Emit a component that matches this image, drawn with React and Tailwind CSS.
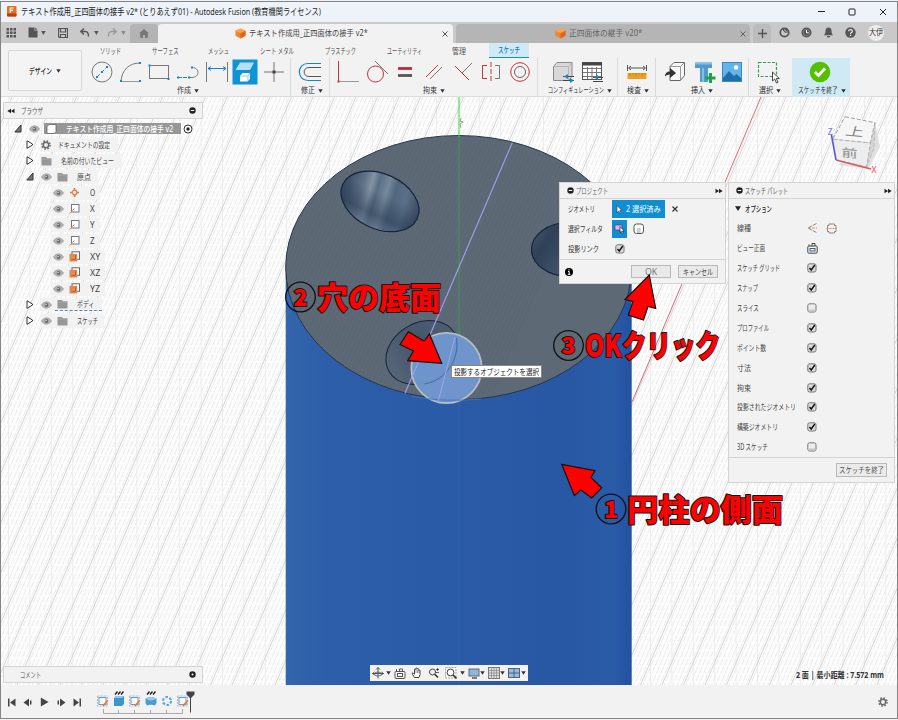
import React, { useLayoutEffect, useRef } from "react";

// Condenses a line of text so that it fills the width its class gives.
function Fit({ className = "", children }) {
  const outer = useRef(null);
  const inner = useRef(null);
  useLayoutEffect(() => {
    const o = outer.current;
    const i = inner.current;
    if (i.offsetWidth > 0) i.style.transform = `scaleX(${o.clientWidth / i.offsetWidth})`;
  });
  return (
    <span ref={outer} className={`block shrink-0 whitespace-nowrap leading-none ${className}`}>
      <span ref={inner} className="inline-block origin-left align-top leading-none">
        {children}
      </span>
    </span>
  );
}

function Svg({ w = 26, h = 26, className = "", children }) {
  return (
    <svg width={w} height={h} viewBox={`0 0 ${w} ${h}`} fill="none" className={`shrink-0 ${className}`}>
      {children}
    </svg>
  );
}

const Caret = ({ className = "" }) => (
  <Svg w={5} h={4} className={className}>
    <path d="M0.3 0.3h4.4L2.5 3.8z" fill="#333" />
  </Svg>
);

const Minus = () => (
  <Svg w={7} h={7}>
    <circle cx="3.5" cy="3.5" r="3.2" fill="#222" />
    <path d="M1.8 3.5h3.4" stroke="#fff" />
  </Svg>
);

const FastForward = ({ flip }) => (
  <Svg w={8} h={6} className={flip ? "rotate-180" : ""}>
    <path d="M0.5 0.8 4 3 0.5 5.2zM4 0.8 7.7 3 4 5.2z" fill="#222" />
  </Svg>
);

const Check = ({ on = true }) => (
  <Svg w={10} h={10}>
    <rect x="0.8" y="0.8" width="8.2" height="8.2" rx="1.8" fill={on ? "#d9d9d9" : "#ececec"} stroke="#777" />
    {on ? <path d="M2.5 5 4.2 7 7.8 2" stroke="#111" strokeWidth="1.4" /> : <path d="M1.5 6.5h7v2h-7z" fill="#c6c6c6" />}
  </Svg>
);

const Cube = () => (
  <Svg w={11} h={11}>
    <path d="M5.5 0.5 10.5 2.8v5L5.5 10.5 0.5 7.8v-5z" fill="#f58233" />
    <path d="M5.5 0.5 10.5 2.8 5.5 5.2 0.5 2.8z" fill="#fba45f" />
    <path d="M5.5 5.2 10.5 2.8v5l-5 2.7z" fill="#e0641a" />
  </Svg>
);

function TitleBar() {
  return (
    <div className="flex h-[22px] shrink-0 items-center bg-[#eef3fa] pt-px pl-[7px]">
      <Svg w={10} h={11}>
        <rect x="0" y="0" width="9.5" height="10.5" rx="1" fill="#f26a1b" />
        <path d="M0 7.5h9.5v2a1 1 0 0 1-1 1H1a1 1 0 0 1-1-1z" fill="#b8400a" />
        <path d="M3.2 7V2h3.6M3.2 4.4h3" stroke="#fff" strokeWidth="1.1" />
      </Svg>
      <Fit className="ml-[4px] w-[300px] text-[9.5px] text-[#1c1c1c]">
        テキスト作成用_正四面体の接手 v2* (とりあえず01) - Autodesk Fusion (教育機関ライセンス)
      </Fit>
      <div className="ml-auto flex items-center gap-[23px] pr-[11px]">
        <Svg w={7} h={7}><path d="M0 3.500h7" stroke="#222" /></Svg>
        <Svg w={8} h={8}><rect x="1" y="1" width="6" height="6" rx="0.8" stroke="#222" /></Svg>
        <Svg w={8} h={8}><path d="M1 1l6 6M7 1 1 7" stroke="#222" /></Svg>
      </div>
    </div>
  );
}

function TabBar() {
  return (
    <div className="flex h-[21px] shrink-0 items-end bg-[#c9c9c9]">
      <div className="flex h-[21px] w-[130px] items-center pl-[6px]">
        <Svg w={11} h={10}>
          {[0, 3.5, 7].map((y) => [0.5, 4, 7.5].map((x) => <rect key={`${x}-${y}`} x={x} y={y} width="2.5" height="2.5" fill="#555" />))}
        </Svg>
        <Svg w={10} h={11} className="ml-[11px]"><path d="M0.5 0.5h6v3h3v7h-9z" fill="#555" /><path d="M7.2 0.5 9.5 2.8H7.2z" fill="#555" /></Svg>
        <Svg w={5} h={4} className="ml-[3px]"><path d="M0.2 0h4.4L2.4 4z" fill="#555" /></Svg>
        <Svg w={10} h={10} className="ml-[12px]"><path d="M0.5 0.5h9v9h-8l-1-1zM2.5 0.5v3.500h5V.5M2.5 9.5V6.5h5v3" stroke="#555" strokeWidth="1.2" /></Svg>
        <Svg w={10} h={9} className="ml-[12px]"><path d="M4 0.5 0.8 3.5 4 6.5M1 3.5h4.5c2 0 3.2 2 2.8 5" stroke="#555" strokeWidth="1.4" /></Svg>
        <Svg w={5} h={4} className="ml-[4px]"><path d="M0.2 0h4.4L2.4 4z" fill="#555" /></Svg>
        <Svg w={10} h={9} className="ml-[8px]"><path d="M6 0.5 9.2 3.5 6 6.5M9 3.5H4.5c-2 0-3.2 2-2.8 5" stroke="#999" strokeWidth="1.4" /></Svg>
        <Svg w={5} h={4} className="ml-[4px]"><path d="M0.2 0h4.4L2.4 4z" fill="#888" /></Svg>
      </div>
      <div className="flex h-[19px] w-[28px] items-center justify-center rounded-t-sm bg-[#b3b3b3]">
        <Svg w={10} h={9}><path d="M5 0 10 4.5H8.7V9H6V6H4v3H1.3V4.5H0z" fill="#777" /></Svg>
      </div>
      <div className="flex h-[19px] w-[295px] items-center rounded-t-sm bg-[#f2f2f2] pl-[77px]">
        <Cube />
        <Fit className="ml-[3px] w-[119px] text-[8.5px] text-[#444]">テキスト作成用_正四面体の接手 v2*</Fit>
        <Svg w={6} h={6} className="ml-auto mr-[5px]"><path d="M0.5 0.5l5 5M5.5.5l-5 5" stroke="#555" /></Svg>
      </div>
      <div className="ml-[3px] flex h-[19px] w-[294px] items-center rounded-t-sm bg-[#b5b5b5] pl-[99px]">
        <Cube />
        <Fit className="ml-[3px] w-[73px] text-[8.5px] text-[#666]">正四面体の継手 v20*</Fit>
        <Svg w={6} h={6} className="ml-auto mr-[4px]"><path d="M0.5 0.5l5 5M5.5.5l-5 5" stroke="#666" /></Svg>
      </div>
      <div className="ml-[3px] flex h-[19px] w-[18px] items-center justify-center rounded-t-sm bg-[#bcbcbc]">
        <Svg w={9} h={9}><path d="M4.5 0v9M0 4.5h9" stroke="#555" strokeWidth="1.5" /></Svg>
      </div>
      <div className="flex h-[21px] items-center gap-[11px] pl-[8px]">
        <Svg w={11} h={11}><circle cx="5.5" cy="5.5" r="4.2" stroke="#555" strokeWidth="1.8" /><path d="M4 1.5h4.5v4L6.5 6 4 3.5z" fill="#555" /><path d="M5 2.5 7.8 5" stroke="#c9c9c9" /></Svg>
        <Svg w={11} h={11}><circle cx="5.5" cy="5.5" r="5" fill="#555" /><circle cx="5.5" cy="5.5" r="3.300" stroke="#999" strokeWidth="0.6" /><path d="M5.5 3v2.800h2.200" stroke="#fff" /></Svg>
        <Svg w={11} h={11}><path d="M5.5 0.5c2 0 3 1.4 3 3.2 0 3 .8 3.6 1.7 4.5H.8c.9-.9 1.7-1.5 1.7-4.5C2.500 1.900 3.500.5 5.500.5zM4 9h3c0 2-3 2-3 0z" fill="#555" /></Svg>
        <Svg w={11} h={11}><circle cx="5.5" cy="5.5" r="5.2" fill="#555" /><path d="M3.7 4.300c0-2.400 3.700-2.200 3.700-.1 0 1.300-1.900 1.300-1.900 2.700M5.500 7.700v1.200" stroke="#eee" strokeWidth="1.2" /></Svg>
        <div className="ml-[1px] flex h-4 w-4 items-center justify-center rounded-full bg-[#ececec]">
          <Fit className="w-[14px] text-[7.5px] text-[#333]">大伊</Fit>
        </div>
      </div>
    </div>
  );
}

const BLUE = "#1683cf";
const RED = "#c9303c";
const dot = (x, y, c = BLUE) => <rect key={`${x},${y}`} x={x - 1} y={y - 1} width="2" height="2" fill={c} />;

const icons = {
  circle: <><circle cx="13" cy="13" r="10" stroke="#777" /><path d="M8 18 18 8" stroke={BLUE} strokeDasharray="4 2" />{dot(8, 18)}{dot(13, 13)}{dot(18, 8)}</>,
  arc: <><path d="M3 22C4 11 11 4 22 4" stroke="#777" /><path d="M3 22.500h19" stroke="#999" />{dot(3, 22)}{dot(22, 22)}{dot(22, 4)}</>,
  rect: <><rect x="3.500" y="6.500" width="19" height="13" stroke="#777" />{dot(3.5, 6.5)}{dot(22.5, 20)}</>,
  spline: <><path d="M3 18.500h11" stroke={BLUE} strokeDasharray="4 1" /><path d="M17 8.500c8 0 8 10 0 10h-2" stroke="#777" />{dot(3, 18.5)}{dot(14, 18.5)}{dot(17, 8.5)}</>,
  dim: <><path d="M2.500 3v20M23.500 3v20" stroke="#777" /><path d="M4 9.500h18M7 7.500 4 9.500l3 2M19 7.500l3 2-3 2" stroke={BLUE} /></>,
  project: <><rect x="0.500" y="0.500" width="25" height="25" fill="#0c94d6" /><path d="M8 3.500h14l-4 7.500H3.500z" fill="#b7dff3" /><path d="M8 17l2.500-3H18v6l-2.500 2.500H8z" fill="#fff" /><path d="M8 17h8v5M16 17l2-3" stroke="#8cc9ea" /></>,
  point: <><path d="M13 3v20M3 13h20" stroke="#777" /><rect x="11.500" y="11.500" width="3" height="3" fill="#444" /></>,
  offset: <><path d="M24 4.500H11c-11.500 0-11.500 17 0 17h13" stroke={BLUE} strokeWidth="1.200" /><path d="M24 8.500H12c-6.500 0-6.500 9 0 9h12" stroke="#555" /></>,
  vert: <><path d="M3.500 2v20" stroke={RED} /><path d="M3 22.500h21" stroke="#999" />{dot(3.5, 22.5, RED)}</>,
  tangent: <><circle cx="11.500" cy="15" r="8" stroke={RED} /><path d="M11 2l13 13" stroke="#777" /></>,
  equal: <><path d="M6 9.500h14" stroke="#b82e38" strokeWidth="2.800" /><path d="M6 16.500h14" stroke="#555" strokeWidth="2.800" /></>,
  parallel: <><path d="M5 18 17 6" stroke={RED} /><path d="M9 20 21 8" stroke="#777" /></>,
  perp: <><path d="M5 7l14 14" stroke={RED} /><path d="M12 14 22 4" stroke="#777" /></>,
  mirror: <><path d="M9 6.500H4.500v13H9" stroke={RED} /><path d="M13 3v20" stroke={RED} strokeDasharray="5 2" /><path d="M17 6.500h4.500v13H17" stroke="#777" /></>,
  conc: <><circle cx="13" cy="13" r="9.300" stroke={RED} /><circle cx="13" cy="13" r="5.500" stroke="#666" /></>,
  config: <><path d="M3.500 7.500l3.500-4h15v14l-3.500 4h-15z" fill="#d8d8d8" stroke="#888" /><path d="M3.500 7.500h15v14M18.500 7.500l3.500-4" stroke="#b5b5b5" /><path d="M13 17.500h11M13 21.500h11" stroke="#444" strokeWidth="1.200" /><path d="M14 17.500l4-2.500v5zM24 21.500l-4-2.500v5z" fill={BLUE} /></>,
  table: <><rect x="3.500" y="3.500" width="19" height="17" fill="#fff" stroke="#555" /><path d="M3 5h20" stroke="#444" strokeWidth="3" /><path d="M4 9.500h18M4 13.500h18M4 17.500h18M8.500 8v12M13 8v12M17.500 8v12" stroke="#777" /><path d="M14 18.500h10M14 22.500h10" stroke="#444" strokeWidth="1.200" /><path d="M15 18.500l4-2.500v5z" fill={BLUE} /></>,
  ruler: <><path d="M3.500 6v6M22.500 6v6M5 9h16M7 7 4.500 9 7 11M19 7l2.500 2-2.500 2" stroke="#555" /><rect x="3.500" y="14" width="19" height="6" fill="#e9a125" /><path d="M6 14v2.500M9 14v1.500M12 14v2.500M15 14v1.500M18 14v2.500M21 14v1.500" stroke="#a86f08" strokeWidth="0.700" /></>,
  derive: <><path d="M8 7.500l4-4h10.500v13l-4 5H8z" fill="#f9f9f9" stroke="#666" /><path d="M8 7.500h10.500v14M18.500 7.500l4-4" stroke="#999" /><path d="M3 17.500c0-3.500 2-5 5-5V9l6 5-6 5v-3.500c-3 0-4 1-5 2z" fill="#333" /></>,
  fastener: <><path d="M4 3.500h17v5.500h-4v14h-8V9H4z" fill="#4f9bcf" /><path d="M4 3.500h17v2H4zM11 9h2v14h-2z" fill="#84c0e6" /><path d="M19.500 14v10M14.500 19h10" stroke="#21a045" strokeWidth="3" /></>,
  image: <><rect x="3.500" y="3.500" width="19" height="19" fill="#63b4e8" stroke="#3c87be" /><circle cx="17" cy="8.500" r="2.200" fill="#fff" /><path d="M4 19l6-7 5 5 2.500-2 4.500 4v3H4z" fill="#1e6fab" /></>,
  select: <><rect x="3.500" y="3.500" width="18" height="14" stroke="#2da35b" strokeWidth="1.200" strokeDasharray="3 1.500" /><path d="M17.500 13v9l2.200-2 1.800 4 1.500-.8-1.700-3.700h3z" fill="#fff" stroke="#333" strokeWidth="0.900" /></>,
  done: <><circle cx="13" cy="13" r="10.300" fill="#55c000" /><path d="M8 13l3.500 3.500 6.500-7" stroke="#fff" strokeWidth="2.800" /></>,
};

function Group({ className, pad, icon, label, labelW, labelClass, last }) {
  return (
    <div className={`flex h-[40px] shrink-0 flex-col ${last ? "" : "border-r border-[#d9d9d9]"} ${className}`}>
      <div className={`flex h-[27px] items-center ${pad}`}>
        {icon.map((n) => (
          <div key={n} className="flex w-[28.6px] shrink-0 justify-center"><Svg>{icons[n]}</Svg></div>
        ))}
      </div>
      <div className={`flex h-[11px] items-center gap-[3px] ${labelClass}`}>
        <Fit className={`text-[7.5px] text-[#333] ${labelW}`}>{label}</Fit>
        <Caret />
      </div>
    </div>
  );
}

function Ribbon() {
  return (
    <div className="flex h-[54px] shrink-0 border-b border-[#dcdcdc] bg-[#f2f2f2]">
      <div className="mt-[7px] ml-[8px] flex h-[41px] w-[74px] shrink-0 items-center justify-center gap-[4px] rounded-[2px] border border-[#d8d8d8] bg-[#f4f4f4]">
        <Fit className="w-[23px] text-[8px] font-medium text-[#222]">デザイン</Fit>
        <Caret />
      </div>
      <div className="ml-[6px] flex flex-col">
        <div className="flex h-[15px] items-center text-[8px] text-[#555]">
          <Fit className="ml-[12px] w-[21px]">ソリッド</Fit>
          <Fit className="ml-[31px] w-[27px]">サーフェス</Fit>
          <Fit className="ml-[29px] w-[21px]">メッシュ</Fit>
          <Fit className="ml-[31px] w-[34px]">シート メタル</Fit>
          <Fit className="ml-[31px] w-[31px]">プラスチック</Fit>
          <Fit className="ml-[31px] w-[35px]">ユーティリティ</Fit>
          <Fit className="ml-[30px] w-[14px]">管理</Fit>
          <div className="ml-[23px] flex h-[15px] w-[40px] items-center justify-center border-b-[1.500px] border-[#0d8fd0] bg-[#cfeaf6] text-[#0878ba]">
            <Fit className="w-[22px] font-medium">スケッチ</Fit>
          </div>
        </div>
        <div className="flex">
          <Group className="w-[203px]" pad="" icon={["circle", "arc", "rect", "spline", "dim", "project", "point"]} label="作成" labelW="w-[14px]" labelClass="pl-[89px]" />
          <Group className="w-[39px]" pad="pl-[5px]" icon={["offset"]} label="修正" labelW="w-[14px]" labelClass="pl-[10px]" />
          <Group className="w-[208px]" pad="pl-[4px]" icon={["vert", "tangent", "equal", "parallel", "perp", "mirror", "conc"]} label="拘束" labelW="w-[14px]" labelClass="pl-[93px]" />
          <Group className="w-[80px]" pad="pl-[11px]" icon={["config", "table"]} label="コンフィギュレーション" labelW="w-[56px]" labelClass="pl-[10px]" />
          <Group className="w-[38px]" pad="pl-[5px]" icon={["ruler"]} label="検査" labelW="w-[14px]" labelClass="pl-[9px]" />
          <Group className="w-[93px]" pad="pl-[5px]" icon={["derive", "fastener", "image"]} label="挿入" labelW="w-[14px]" labelClass="pl-[35px]" />
          <Group last className="w-[43px]" pad="pl-[5px]" icon={["select"]} label="選択" labelW="w-[14px]" labelClass="pl-[10px]" />
          <Group last className="w-[58px] bg-[#cfeaf5]" pad="pl-[14px]" icon={["done"]} label="スケッチを終了" labelW="w-[40px]" labelClass="pl-[6px]" />
        </div>
      </div>
    </div>
  );
}

const range = (n) => Array.from({ length: n }, (_, i) => i);

function Canvas() {
  return (
    <svg className="absolute inset-0" width="898" height="588" viewBox="0 97 898 588" fill="none">
      <defs>
        <linearGradient id="side" x1="0" x2="1" y1="0" y2="0">
          <stop offset="0" stopColor="#3366ad" />
          <stop offset="0.12" stopColor="#2d5ea9" />
          <stop offset="0.8" stopColor="#2858a3" />
          <stop offset="0.95" stopColor="#2a5ba7" />
          <stop offset="1" stopColor="#2352a0" />
        </linearGradient>
        <linearGradient id="bore" x1="0" x2="1" y1="0.100" y2="0">
          <stop offset="0" stopColor="#3d4f66" />
          <stop offset="0.2" stopColor="#5f7286" />
          <stop offset="0.3" stopColor="#8393a4" />
          <stop offset="0.38" stopColor="#5a6d82" />
          <stop offset="0.5" stopColor="#76899b" />
          <stop offset="0.6" stopColor="#52677e" />
          <stop offset="0.75" stopColor="#5b7088" />
          <stop offset="1" stopColor="#2e4058" />
        </linearGradient>
        <linearGradient id="shade" x1="0" x2="0" y1="0" y2="1">
          <stop offset="0.35" stopColor="#24364e" stopOpacity="0" />
          <stop offset="0.75" stopColor="#24364e" stopOpacity="0.5" />
          <stop offset="1" stopColor="#5d7188" stopOpacity="0.6" />
        </linearGradient>
        <linearGradient id="bore2" x1="0" x2="1" y1="0" y2="0.5">
          <stop offset="0" stopColor="#4a5b70" />
          <stop offset="0.3" stopColor="#2f4057" />
          <stop offset="1" stopColor="#50637b" />
        </linearGradient>
        <linearGradient id="bore3" x1="0" x2="1" y1="0" y2="0">
          <stop offset="0" stopColor="#566577" />
          <stop offset="0.5" stopColor="#46566b" />
          <stop offset="1" stopColor="#4d5e73" />
        </linearGradient>
        <clipPath id="face"><ellipse cx="458.700" cy="267.500" rx="173" ry="132" /></clipPath>
      </defs>
      <rect x="0" y="97" width="898" height="588" fill="#fdfdfd" />
      <g stroke="#e9e9e9" strokeWidth="0.9" strokeDasharray="7 1.500">
        {range(270).map((i) => <path key={i} d={`M${i * 4.3 + 10} 97l-253 588`} />)}
      </g>
      <g stroke="#ededed">
        {range(42).map((i) => <path key={i} d={`M${i * 21.4 + 8.5} 97v588`} />)}
      </g>
      <g stroke="#cfcfcf" strokeWidth="0.9">
        {range(54).map((i) => <path key={i} d={`M${i * 21.5 + 12} 97l-253 588`} />)}
      </g>
      <path d="M761 97 632 402" stroke="#dc6b72" />
      <path d="M285.700 267v418h346V267z" fill="url(#side)" />
      <ellipse cx="458.700" cy="267.500" rx="173" ry="132" fill="#5e6976" stroke="#25364b" />
      <g clipPath="url(#face)" stroke="#566372" strokeWidth="0.8" opacity="0.6">
        {range(75).map((i) => <path key={i} d={`M${i * 4.3 + 285} 135l-114 265`} />)}
      </g>
      <g transform="rotate(24.500 380 201.400)">
        <ellipse cx="380" cy="201.400" rx="41" ry="27.500" fill="url(#bore)" />
        <ellipse cx="380" cy="201.400" rx="41" ry="27.500" fill="url(#shade)" stroke="#14243a" strokeWidth="1.200" />
      </g>
      <ellipse cx="569" cy="249.500" rx="37.500" ry="27" fill="url(#bore2)" stroke="#14243a" strokeWidth="1.200" />
      <ellipse cx="422" cy="352.500" rx="38" ry="29.600" transform="rotate(-30 422 352.500)" fill="url(#bore3)" stroke="#14243a" />
      <path d="M459 97v40" stroke="#35e035" />
      <path d="M459 137v233" stroke="#3c9a55" />
      <path d="M459 400v285" stroke="#2f64ab" />
      <path d="M461 118l-1 3 3 1-3 2 1 4" stroke="#777" strokeWidth="0.700" />
      <path d="M512.300 142.700 405 393.300" stroke="#a39be6" strokeWidth="1.200" />
      <circle cx="446.500" cy="368" r="35.200" fill="#7199d3" fillOpacity="0.93" stroke="#b6bcc2" strokeWidth="1.800" />
      <path d="M456.500 338c3 20-9 42-32 46" stroke="#43649a" strokeWidth="0.900" />
      <path d="M411.500 396c23 5 46 5 69 3" stroke="#4a74b2" strokeWidth="0.900" />
      <path d="M455 337 438 402M428 340l-16 37" stroke="#9aa6ec" />
      <g>
        <path d="M870 142l5-19 5 24-12 22-30-4z" fill="#e0e0e0" />
        <path d="M845 116.700 875 122.700 870.500 143 832.700 139.300z" fill="#f6f6f6" stroke="#888" strokeDasharray="4 2" strokeWidth="0.800" />
        <path d="M832.700 139.300 870.500 143 866.700 166.700 836 160z" fill="#ededed" stroke="#aaa" strokeDasharray="4 2" strokeWidth="0.800" />
        <path d="M875 122.700 870.500 143 866.700 166.700 874 148z" fill="#d5d5d5" stroke="#aaa" strokeDasharray="4 2" strokeWidth="0.700" />
        <path d="M831.300 134 836 160" stroke="#5a5ae0" strokeWidth="1.600" />
        <path d="M836 160l35 9" stroke="#d05c66" strokeWidth="1.500" />
        <g className="font-['Noto_Sans_CJK_JP',sans-serif]">
          <text transform="matrix(1.15 .1 -.2 .72 844.500 135)" fontSize="16" fill="#888">上</text>
          <text transform="matrix(1 .1 0 .72 841.500 156.500)" fontSize="16" fontWeight="500" fill="#999">前</text>
          <text x="827.500" y="135" fontSize="8.500" fontWeight="500" fill="#7d7df0">Z</text>
          <text x="871.500" y="173" fontSize="8.500" fontWeight="500" fill="#f06a78">X</text>
        </g>
      </g>
    </svg>
  );
}

const Eye = () => (
  <Svg w={11} h={8}>
    <path d="M0.500 4C3-.2 8-.2 10.500 4 8 8.200 3 8.200.5 4z" fill="#b5b5b5" stroke="#969696" strokeWidth="0.700" />
    <circle cx="5.500" cy="4" r="1.900" fill="#6a6a6a" /><circle cx="5" cy="3.500" r="0.700" fill="#eee" />
  </Svg>
);
const Tri = ({ open }) => (
  <Svg w={8} h={9}>
    {open ? <path d="M7 1v7H0.800z" fill="#777" stroke="#333" /> : <path d="M1 0.800v7.500L6.500 5V4z" fill="#fff" stroke="#333" />}
  </Svg>
);
const Folder = () => <Svg w={11} h={10}><path d="M0.500 1h4.500l1 1.300h4.500V9.500h-10z" fill="#979797" /><path d="M0.500 3h10" stroke="#b5b5b5" strokeWidth="0.600" /></Svg>;
const Gear = ({ className = "" }) => (
  <Svg w={10} h={10} className={className}><circle cx="5" cy="5" r="2.700" stroke="#6a6a6a" strokeWidth="1.500" /><circle cx="5" cy="5" r="4.100" stroke="#6a6a6a" strokeWidth="1.500" strokeDasharray="1.600 1.620" /></Svg>
);
const Origin = () => <Svg w={11} h={11}><circle cx="5.500" cy="5.500" r="2.300" stroke="#dc7a3c" strokeWidth="1.200" /><path d="M5.500 1v2M5.500 8v2M1 5.500h2M8 5.500h2" stroke="#dc7a3c" strokeWidth="1.600" /></Svg>;
const Axis = () => <Svg w={11} h={11}><rect x="2.500" y="1.500" width="7.500" height="7.500" fill="#fff" stroke="#778" /><path d="M0.500 10.500 6 5" stroke="#e08a55" strokeDasharray="3 1" /></Svg>;
const Plane = () => <Svg w={11} h={11}><rect x="3" y="0.800" width="7.500" height="7.500" fill="#fff" stroke="#667" /><rect x="0.500" y="2.800" width="7.700" height="7.700" fill="#e08a50" /><path d="M2.500 8.500H6.500V4" stroke="#c2652c" /></Svg>;

const shell = "border border-[#d4d4d4] bg-[#f2f2f2]";

function Browser() {
  return (
    <div className="absolute top-[5px] left-[3px] flex w-[200px] flex-col">
      <div className={`flex h-[17px] items-center ${shell} pl-[3px] pr-[6px]`}>
        <FastForward flip />
        <Fit className="ml-[6px] w-[22px] text-[8px] text-[#555]">ブラウザ</Fit>
        <div className="ml-auto"><Minus /></div>
      </div>
      <div className="flex flex-col pt-[1.500px] text-[8px] text-[#444]">
        <div className="flex h-4 items-center pl-[11px]">
          <Tri open />
          <div className="ml-[7px] flex h-3 w-[14px] items-center bg-[#f4f4f4]"><Eye /></div>
          <div className="ml-[1px] flex h-[11px] w-[137px] items-center bg-[#979797] pl-[2px]">
            <Svg w={11} h={10}><path d="M1 2.500 3 .5h7v7l-2 2H1z" fill="#fff" stroke="#555" strokeWidth="0.700" /></Svg>
            <Fit className="ml-[9px] w-[107px] font-medium text-white">テキスト作成用_正四面体の接手 v2</Fit>
          </div>
          <Svg w={10} h={10} className="ml-[2px]"><circle cx="5" cy="5" r="4" fill="#fff" stroke="#333" /><circle cx="5" cy="5" r="1.700" fill="#222" /></Svg>
        </div>
        <div className="flex h-4 items-center pl-[23px]">
          <Tri />
          <div className="ml-[6px] flex h-[14px] w-[78px] items-center bg-[#f2f2f2] pl-[1px]"><Gear /><Fit className="ml-[7px] w-[52px]">ドキュメントの設定</Fit></div>
        </div>
        <div className="flex h-4 items-center pl-[23px]">
          <Tri />
          <div className="ml-[6px] flex h-[14px] w-[82px] items-center bg-[#f2f2f2] pl-[1px]"><Folder /><Fit className="ml-[9px] w-[53px]">名前の付いたビュー</Fit></div>
        </div>
        <div className="flex h-4 items-center pl-[23px]">
          <Tri open />
          <div className="ml-[6px] flex h-[14px] w-[58px] items-center bg-[#f2f2f2] pl-[1px]"><Eye /><div className="ml-[5px]"><Folder /></div><Fit className="ml-[9px] w-[14px]">原点</Fit></div>
        </div>
        {[["O", Origin, "w-[5px]"], ["X", Axis, "w-[5px]"], ["Y", Axis, "w-[5px]"], ["Z", Axis, "w-[5px]"], ["XY", Plane, "w-[10px]"], ["XZ", Plane, "w-[10px]"], ["YZ", Plane, "w-[10px]"]].map(([n, I, w]) => (
          <div key={n} className="flex h-4 items-center pl-[48px]">
            <div className="flex h-[14px] items-center bg-[#f2f2f2] pl-[2px] pr-[5px]"><Eye /><div className="ml-[5px]"><I /></div><Fit className={`ml-[10px] ${w}`}>{n}</Fit></div>
          </div>
        ))}
        <div className="flex h-4 items-center pl-[23px]">
          <Tri />
          <div className="ml-[6px] flex h-[13px] w-[62px] items-center bg-[#f2f2f2] pl-[1px]">
            <Eye />
            <div className="ml-[3px] flex h-[12px] w-[47px] items-center border-b border-dashed border-[#5b86b5] pl-[2px]"><Folder /><Fit className="ml-[9px] w-[17px]">ボディ</Fit></div>
          </div>
        </div>
        <div className="flex h-4 items-center pl-[23px]">
          <Tri />
          <div className="ml-[6px] flex h-[14px] w-[64px] items-center bg-[#f2f2f2] pl-[1px]"><Eye /><div className="ml-[5px]"><Folder /></div><Fit className="ml-[9px] w-[21px]">スケッチ</Fit></div>
        </div>
      </div>
    </div>
  );
}

function ProjectDialog() {
  return (
    <div className={`absolute top-[85px] left-[559px] flex h-[102px] w-[167px] flex-col ${shell} text-[8px] text-[#333]`}>
      <div className="flex h-[16px] shrink-0 items-center border-b border-[#d4d4d4] pl-[7px] pr-[2px]">
        <Minus /><Fit className="ml-[2px] w-[32px] text-[#666]">プロジェクト</Fit>
        <div className="ml-auto"><FastForward /></div>
      </div>
      <div className="flex h-[61px] flex-col border-b border-[#d4d4d4] pl-[8px]">
        <div className="flex h-[20px] items-center">
          <Fit className="w-[27px]">ジオメトリ</Fit>
          <div className="ml-[17px] flex h-[18px] w-[53px] items-center bg-[#0f8fd2] pl-[4px] text-white">
            <Svg w={7} h={9}><path d="M1 0.500v7l1.700-1.500L4 8.500l1-.5-1.200-2.500h2z" fill="#fff" stroke="#334" strokeWidth="0.600" /></Svg>
            <Fit className="ml-[3px] w-[35px]">2 選択済み</Fit>
          </div>
          <Svg w={6} h={6} className="ml-[7px]"><path d="M0.500 0.500l5 5M5.500.5l-5 5" stroke="#333" strokeWidth="1.200" /></Svg>
        </div>
        <div className="flex h-[20px] items-center">
          <Fit className="w-[35px]">選択フィルタ</Fit>
          <div className="ml-[9px] flex h-[18px] w-[15px] items-center justify-center bg-[#0f8fd2]">
            <Svg w={11} h={10}><rect x="1" y="1" width="7" height="5" fill="#e3b4ee" stroke="#5a3a88" strokeWidth="0.700" /><path d="M6 2.500v6l1.300-1.200L8.500 9.500l1-.5-1-2h1.700z" fill="#fff" stroke="#222" strokeWidth="0.700" /></Svg>
          </div>
          <Svg w={12} h={12} className="ml-[6px]"><rect x="1" y="1" width="9.500" height="9.500" rx="2.500" fill="#fff" stroke="#555" /><rect x="4" y="5" width="3.500" height="5" fill="#ccc" /></Svg>
        </div>
        <div className="flex h-[19px] items-center">
          <Fit className="w-[31px]">投影リンク</Fit>
          <div className="ml-[16px]"><Check /></div>
        </div>
      </div>
      <div className="flex flex-1 items-center pl-[5px]">
        <Svg w={8} h={8}><circle cx="4" cy="4" r="4" fill="#000" /><path d="M4 1.300v1.200M3 3.500h1.200v2.700M2.800 6.300h2.600" stroke="#fff" /></Svg>
        <div className="ml-[58px] flex h-[13px] w-[40px] items-center justify-center border border-[#b9b9b9] bg-[#e9e9e9]"><Fit className="w-[12px] text-[#777]">OK</Fit></div>
        <div className="ml-[7px] flex h-[13px] w-[40px] items-center justify-center border border-[#b9b9b9] bg-[#e9e9e9]"><Fit className="w-[30px] text-[#444]">キャンセル</Fit></div>
      </div>
    </div>
  );
}

const options = [
  ["スケッチ グリッド", "w-[43px]", true],
  ["スナップ", "w-[21px]", true],
  ["スライス", "w-[22px]", false],
  ["プロファイル", "w-[32px]", true],
  ["ポイント数", "w-[29px]", true],
  ["寸法", "w-[14px]", true],
  ["拘束", "w-[14px]", true],
  ["投影されたジオメトリ", "w-[59px]", true],
  ["構築ジオメトリ", "w-[41px]", true],
  ["3D スケッチ", "w-[31px]", false],
];

function Row({ label, w, children }) {
  return (
    <div className="flex h-[19.900px] shrink-0 items-center">
      <div className="w-[77.500px] pl-[8px]"><Fit className={w}>{label}</Fit></div>
      {children}
    </div>
  );
}

function Palette() {
  return (
    <div className={`absolute top-[85px] left-[728px] flex h-[301px] w-[167px] flex-col ${shell} text-[8px] text-[#444]`}>
      <div className="flex h-[16px] shrink-0 items-center border-b border-[#d4d4d4] pl-[7px] pr-[2px]">
        <Minus /><Fit className="ml-[2px] w-[43px] text-[#666]">スケッチ パレット</Fit>
        <div className="ml-auto"><FastForward /></div>
      </div>
      <div className="flex h-[19.500px] shrink-0 items-center pl-[6px]">
        <Svg w={6} h={5}><path d="M0 0.300h6L3 5z" fill="#222" /></Svg>
        <Fit className="ml-[4px] w-[27px] font-medium text-[#222]">オプション</Fit>
      </div>
      <Row label="線種" w="w-[14px]">
        <Svg w={11} h={10}><path d="M9.500 0.500 1 5l8.500 4.500" stroke="#888" strokeDasharray="4 1" /><path d="M1 5h9" stroke="#e28a4e" strokeDasharray="3 1" /></Svg>
        <Svg w={11} h={11} className="ml-[8px]"><path d="M3 1h5.500v1.500H10v6H8.500V10H3V8.500H1.500v-6H3z" stroke="#888" /><path d="M0.500 5.500h10" stroke="#e28a4e" strokeDasharray="2 1" /></Svg>
      </Row>
      <Row label="ビュー正面" w="w-[28px]">
        <Svg w={11} h={11}><rect x="0.800" y="3" width="9.400" height="7.200" rx="1" stroke="#444" /><rect x="3" y="5.500" width="5" height="2.500" stroke="#445a77" /><path d="M2 3V1.500M5 3V.5h3V3" stroke="#444" /></Svg>
      </Row>
      {options.map(([l, w, on]) => <Row key={l} label={l} w={w}><Check on={on} /></Row>)}
      <div className="flex flex-1 items-center justify-end border-t border-[#d4d4d4] pr-[7px]">
        <div className="flex h-[14px] w-[51px] items-center justify-center border border-[#b9b9b9] bg-[#ebebeb]"><Fit className="w-[45px] text-[#555]">スケッチを終了</Fit></div>
      </div>
    </div>
  );
}

function NavBar() {
  return (
    <div className="absolute top-[568px] left-[370px] flex h-[16px] w-[158px] items-center bg-[#f2f2f2] pl-[2px]">
      <Svg w={12} h={12}><path d="M0.500 6.500h11M6 0.500v11M4 2.500l2-2 2 2M2.500 5l-2 1.500 2 1.500M9.500 5l2 1.500-2 1.500" stroke="#444" strokeWidth="0.900" /><ellipse cx="6" cy="7" rx="3.500" ry="2" stroke="#555" strokeWidth="0.800" /></Svg>
      <Caret className="ml-[2px]" />
      <Svg w={12} h={11} className="ml-[3px]"><rect x="1" y="3.500" width="10" height="7" rx="0.800" stroke="#555" /><rect x="3.500" y="5.500" width="5" height="3" stroke="#555" /><path d="M2.500 3V1M5.500 3V1h3v2" stroke="#555" /></Svg>
      <Svg w={12} h={12} className="ml-[5px]"><path d="M3.500 10.500 1 6.500l1-.7 1.500 1.500V2.500c0-1 1.300-1 1.300 0V1.800c0-1 1.400-1 1.400 0v.4c0-1 1.400-1 1.400.2v1c.2-.8 1.400-.8 1.400.4v3.700l-1 3z" fill="#fff" stroke="#444" /><path d="M5 3v3M6.500 3v3M8 3.500V6" stroke="#555" strokeWidth="0.600" /></Svg>
      <Svg w={12} h={12} className="ml-[5px]"><circle cx="4.500" cy="5" r="3" stroke="#444" /><path d="M6.700 7.200 10 10.500" stroke="#333" strokeWidth="1.600" /><path d="M9.500 1v3M8 2.500h3M8 5.500h3" stroke="#333" strokeWidth="0.800" /></Svg>
      <Svg w={12} h={12} className="ml-[5px]"><rect x="0.500" y="0.500" width="10.500" height="10.500" stroke="#aaa" strokeDasharray="2 1" /><circle cx="5.500" cy="5.500" r="3.400" fill="#fff" stroke="#444" /><path d="M8 8l3.500 3.500" stroke="#333" strokeWidth="1.600" /></Svg>
      <Caret className="ml-[3px]" />
      <Svg w={12} h={11} className="ml-[3px]"><rect x="1" y="1" width="10" height="7" fill="#8fb7dd" stroke="#666" /><path d="M4 10h5" stroke="#555" strokeWidth="1.500" /></Svg>
      <Caret />
      <Svg w={12} h={12} className="ml-[3px]"><rect x="0.500" y="0.500" width="11" height="11" fill="#ddd" stroke="#777" /><path d="M3.500 0v12M6 0v12M8.500 0v12M0 3.500h12M0 6h12M0 8.500h12" stroke="#888" strokeWidth="0.700" /></Svg>
      <Caret />
      <Svg w={12} h={10} className="ml-[3px]"><rect x="0.500" y="0.500" width="11" height="9" fill="#9dbbd9" stroke="#47658a" /><path d="M6 0v10M0 5h12" stroke="#47658a" /></Svg>
      <Caret className="ml-px" />
    </div>
  );
}

const TlSketch = () => <Svg w={12} h={12}><rect x="2" y="2.500" width="7" height="7" fill="#f8fbfe" stroke="#6f9cc4" /><path d="M0.500 1h10M0.500 1v10h10V1" stroke="#9bb3c9" strokeWidth="0.800" strokeDasharray="2 1" /><path d="M6 10.800 10.800 5.500" stroke="#e87a2e" strokeWidth="1.800" /></Svg>;
const Hatch = () => <Svg w={11} h={4}><path d="M1 3.500 3.500.5M4 3.500 6.500.5M7 3.500 9.500.5" stroke="#222" strokeWidth="1.400" /></Svg>;

function Timeline() {
  return (
    <div className="flex h-[35px] shrink-0 bg-[#f2f2f2] pt-[6px] pl-[7px]">
      <div className="flex h-[22px] items-center gap-[7px]">
        <Svg w={9} h={9}><path d="M1 0.500h1.500v8H1zM8.500.5v8L3 4.500z" fill="#444" /></Svg>
        <Svg w={10} h={9}><path d="M6 0.500v8L0.500 4.500z" fill="#444" /><path d="M7 2.500h1.500v4H7z" fill="#444" /></Svg>
        <Svg w={9} h={10}><path d="M0.800 0.500v9L8.500 5z" fill="#444" /></Svg>
        <Svg w={10} h={9}><path d="M4 0.500v8l5.500-4z" fill="#444" /><path d="M1.500 2.500H3v4H1.500z" fill="#444" /></Svg>
        <Svg w={9} h={9}><path d="M6.500 0.500H8v8H6.500zM.5.5v8L6 4.500z" fill="#444" /></Svg>
      </div>
      <div className="ml-[15px] flex flex-col">
        <div className="flex gap-[4px]">
          {range(6).map((i) => (
            <div key={i} className="flex h-[16px] w-[12px] flex-col items-center justify-end">
              {(i === 1 || i === 3) && <Hatch />}
              {(i === 0 || i === 2 || i === 5) && <TlSketch />}
              {i === 1 && <Svg w={12} h={12}><path d="M1 3l2-2h8v8l-2 2H1z" fill="#3d94cf" /><path d="M1 3l2-2h8L9 3z" fill="#8fc8ec" /></Svg>}
              {i === 3 && <Svg w={12} h={12}><path d="M0.500 3.500C4 1.500 8 1.500 11.500 3.500V8L10 10.500c-2-1-6-1-8 0L0.500 8z" fill="#4a9bd3" /><path d="M0.500 3.500C4 1.500 8 1.500 11.500 3.500 8 6 4 6 .5 3.500z" fill="#9acbeb" /></Svg>}
              {i === 4 && <Svg w={12} h={12}><circle cx="6" cy="6" r="4" stroke="#5aa3d6" strokeWidth="2.200" strokeDasharray="2.500 1.690" /></Svg>}
            </div>
          ))}
        </div>
        <Svg w={90} h={8}><path d="M6.500 2v4.500h79V2M21.500 3v3.500M37.500 3v3.500M53.500 3v3.500M69.500 3v3.500" stroke="#aaa" /></Svg>
      </div>
      <Svg w={9} h={22} className="-ml-[3px]"><path d="M0.500 0.500h8v3L5 7v14.500H4V7L.5 3.500z" fill="#444" /></Svg>
      <Gear className="mt-[6px] mr-[10px] ml-auto" />
    </div>
  );
}

function Callout({ cx, cy, n, x, y, w, children }) {
  return (
    <g>
      <circle cx={cx} cy={cy} r="14.800" stroke="#111" strokeWidth="1.300" />
      <g fill="#f00" stroke="#111" strokeWidth="2" strokeLinejoin="round" fontWeight="900" paintOrder="stroke">
        <text x={cx} y={cy + 8.500} fontSize="23" textAnchor="middle">{n}</text>
        <text x={x} y={y} fontSize="31" textLength={w} lengthAdjust="spacingAndGlyphs">{children}</text>
      </g>
    </g>
  );
}

function Annotations() {
  return (
    <svg className="pointer-events-none absolute inset-0 font-['Noto_Sans_CJK_JP',sans-serif]" width="898" height="588" viewBox="0 97 898 588" fill="none">
      <g fill="#f00" stroke="#111" strokeWidth="1.200">
        <path d="M408.300 331.700 424 341 429.500 334 441.700 363.300 407.700 360.700 413.500 351 400 344.500z" />
        <path d="M649.300 275 655.700 308.500 648 306.500 643.500 320 628.300 315 633 301.500 625 299.500z" />
        <path d="M561.700 464.300 595 470.700 591 477.500 601.700 487.700 591.700 498 581 490 574.300 495.500z" />
      </g>
      <Callout cx={300.5} cy={297} n="2" x={317} y={309} w={124}>穴の底面</Callout>
      <Callout cx={568.5} cy={345.500} n="3" x={585} y={357} w={135}>OKクリック</Callout>
      <Callout cx={611} cy={509} n="1" x={627} y={521} w={156}>円柱の側面</Callout>
    </svg>
  );
}

export default function App() {
  return (
    <div className="relative flex h-[720px] w-[898px] flex-col overflow-hidden bg-[#f2f2f2] font-['Noto_Sans','Noto_Sans_CJK_JP',sans-serif]">
      <TitleBar />
      <TabBar />
      <Ribbon />
      <div className="relative h-[588px] shrink-0 overflow-hidden">
        <Canvas />
        <Browser />
        <ProjectDialog />
        <Palette />
        <div className="absolute top-[268px] left-[451px] flex h-[13px] w-[91px] items-center justify-center border border-[#888] bg-white">
          <Fit className="w-[85px] text-[8px] text-[#222]">投影するオブジェクトを選択</Fit>
        </div>
        <div className={`absolute top-[569px] left-[3px] flex h-[17px] w-[200px] items-center justify-between ${shell} pl-[16px] pr-[6px]`}>
          <Fit className="w-[21px] text-[8px] text-[#666]">コメント</Fit>
          <Svg w={7} h={7}><circle cx="3.500" cy="3.500" r="3.200" fill="#222" /><circle cx="3.500" cy="3.500" r="1" fill="#fff" /></Svg>
        </div>
        <NavBar />
        <div className="absolute top-[574px] left-[796px]">
          <Fit className="w-[88px] text-[8px] font-bold text-[#333]">2 面 | 最小距離 : 7.572 mm</Fit>
        </div>
        <Annotations />
      </div>
      <Timeline />
      <div className="pointer-events-none absolute inset-x-0 top-px bottom-px border border-[#858585]" />
    </div>
  );
}
